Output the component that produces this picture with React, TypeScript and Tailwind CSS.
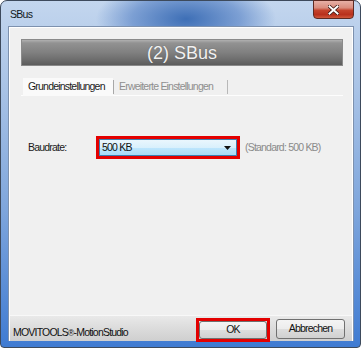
import React from "react";

const font = { fontFamily: '"Liberation Sans", Arial, sans-serif' };

export default function App() {
  return (
    <div className="w-[363px] h-[350px] bg-white whitespace-nowrap" style={font}>
      <div className="w-[361px] h-[348px] rounded-t-[7px] rounded-b-[4px] border border-[#3d4a5c] bg-[radial-gradient(ellipse_90px_40px_at_185px_18px,#3e6fb6_0%,rgba(80,125,195,0.6)_60%,rgba(150,185,230,0)_100%),linear-gradient(to_bottom,#c3d6ee_0%,#a9c3e6_25%,#7fa6dc_60%,#3f7bd2_100%)] flex flex-col">
        {/* title bar */}
        <div className="h-[25px] flex items-start">
          <div className="pl-[9px] pt-[8px] text-[10.5px] tracking-[-0.7px] text-[#101820] leading-none">SBus</div>
          <div className="ml-auto mr-[6px] w-[41px] h-[19px] -mt-[1px] rounded-b-[4px] border border-[#5e2a22] bg-[linear-gradient(to_bottom,#e7b0a6_0%,#d98c7d_40%,#c4432c_55%,#b8301c_80%,#d0583c_100%)] flex items-center justify-center">
            <svg width="11" height="10" viewBox="0 0 11 10">
              <path d="M1.5 1.5 L9.5 8.5 M9.5 1.5 L1.5 8.5" stroke="#3a1510" strokeWidth="3.6" strokeLinecap="square" />
              <path d="M1.5 1.5 L9.5 8.5 M9.5 1.5 L1.5 8.5" stroke="#ffffff" strokeWidth="2" strokeLinecap="square" />
            </svg>
          </div>
        </div>
        {/* client */}
        <div className="ml-[7px] w-[346px] h-[315px] border-x border-t border-[#7d91ae] bg-white pt-[1px] px-[1px] flex flex-col">
          <div className="h-[287px] bg-[#f0f0f0] pl-[11px] pt-[11px] flex flex-col">
            <div className="w-[322px] h-[27px] border border-[#8a8a8a] bg-[linear-gradient(to_bottom,#b0b0b0_0%,#929292_12%,#808080_50%,#6c6c6c_80%,#5c5c5c_100%)] flex items-center justify-center">
              <span className="text-[18px] leading-none text-[#f2f2f2] [text-shadow:0_0_1px_#555]">(2) SBus</span>
            </div>
            <div className="mt-[12px] w-[322px] h-[18px] border-b border-[#fdfdfd] flex items-stretch text-[10.5px] tracking-[-0.8px]">
              <div className="ml-[2px] w-[90px] h-[18px] bg-[#fafafa] pl-[5px] flex items-center text-[#1a1a1a]">Grundeinstellungen</div>
              <div className="w-px bg-[#a8a8a8] mt-[2px] mb-[1px]" />
              <div className="w-[113px] pl-[5px] flex items-center text-[#8e8e8e]">Erweiterte Einstellungen</div>
              <div className="w-px bg-[#b8b8b8] mt-[2px] mb-[1px]" />
            </div>
            <div className="mt-[40px] flex items-center text-[10.5px] tracking-[-0.8px]">
              <div className="w-[75px] pl-[7px] text-[#1a1a1a]">Baudrate:</div>
              <div className="border-[3px] border-[#e30000]">
                <div className="w-[138px] h-[17px] border border-[#3c7fb1] bg-[linear-gradient(to_bottom,#eaf6fd_0%,#d9f0fc_50%,#bee6fd_51%,#a9dbf6_100%)] flex items-center pl-[2px] pr-[5px] text-[#111]">
                  <span>500 KB</span>
                  <svg className="ml-auto" width="7" height="4" viewBox="0 0 7 4">
                    <path d="M0 0 H7 L3.5 4 Z" fill="#111" />
                  </svg>
                </div>
              </div>
              <div className="ml-[5px] text-[#8a8a8a]">(Standard: 500 KB)</div>
            </div>
          </div>
          <div className="h-[26px] bg-[linear-gradient(to_bottom,#e9e9e9_0%,#dedede_40%,#cfcfcf_100%)] border-t border-[#f8f8f8] flex items-center text-[10.5px] tracking-[-0.8px] text-[#111]">
            <div className="pl-[3px] pt-[8px]">MOVITOOLS<span className="text-[8.5px]">®</span>-MotionStudio</div>
            <div className="ml-auto mt-[2px] border-[3px] border-[#e30000]">
              <div className="w-[68px] h-[18px] rounded-[3px] border border-[#707070] bg-[linear-gradient(to_bottom,#f4f4f4_0%,#ececec_50%,#dddddd_51%,#d0d0d0_100%)] flex items-center justify-center">OK</div>
            </div>
            <div className="ml-[6px] mr-[7px] w-[69px] h-[20px] rounded-[3px] border border-[#707070] bg-[linear-gradient(to_bottom,#f4f4f4_0%,#ececec_50%,#dddddd_51%,#d0d0d0_100%)] flex items-center justify-center">Abbrechen</div>
          </div>
        </div>
      </div>
    </div>
  );
}
